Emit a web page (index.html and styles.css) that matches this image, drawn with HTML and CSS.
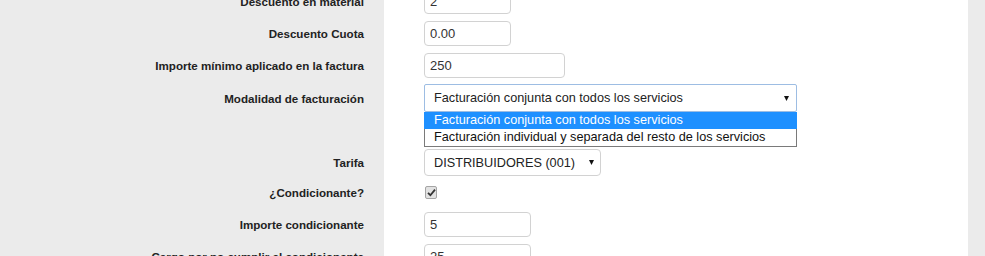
FILE: index.html
```html
<!DOCTYPE html>
<html lang="es">
<head>
    <meta charset="UTF-8">
    <meta name="viewport" content="width=device-width, initial-scale=1.0">
    <title>Condiciones de facturación</title>
    <link rel="stylesheet" href="styles.css">
</head>
<body>
    <form class="form">
        <div class="row gap-7">
            <label class="label" for="descMaterial">Descuento en material</label>
            <div class="field"><input type="text" id="descMaterial" class="input w-sm" value="2"></div>
        </div>
        <div class="row gap-7">
            <label class="label" for="descCuota">Descuento Cuota</label>
            <div class="field"><input type="text" id="descCuota" class="input w-sm" value="0.00"></div>
        </div>
        <div class="row gap-6">
            <label class="label" for="importeMin">Importe mínimo aplicado en la factura</label>
            <div class="field"><input type="text" id="importeMin" class="input w-md" value="250"></div>
        </div>
        <div class="row gap-37">
            <label class="label">Modalidad de facturación</label>
            <div class="field">
                <div class="select-wrap">
                    <div class="select select-open">
                        <span>Facturación conjunta con todos los servicios</span>
                        <svg class="arrow" width="5" height="5" viewBox="0 0 5 5"><path d="M0 0 H5 L2.5 5 Z" fill="#111"/></svg>
                    </div>
                    <ul class="dropdown">
                        <li class="option selected">Facturación conjunta con todos los servicios</li>
                        <li class="option">Facturación individual y separada del resto de los servicios</li>
                    </ul>
                </div>
            </div>
        </div>
        <div class="row gap-10">
            <label class="label">Tarifa</label>
            <div class="field">
                <div class="select select-tarifa">
                    <span>DISTRIBUIDORES (001)</span>
                    <svg class="arrow" width="5" height="5" viewBox="0 0 5 5"><path d="M0 0 H5 L2.5 5 Z" fill="#111"/></svg>
                </div>
            </div>
        </div>
        <div class="row gap-13">
            <label class="label">¿Condicionante?</label>
            <div class="field">
                <span class="checkbox">
                    <svg width="9" height="9" viewBox="0 0 9 9"><path d="M1 4.8 L3.4 7.2 L8 1.6" fill="none" stroke="#333" stroke-width="1.8"/></svg>
                </span>
            </div>
        </div>
        <div class="row gap-7">
            <label class="label" for="importeCond">Importe condicionante</label>
            <div class="field"><input type="text" id="importeCond" class="input w-cond" value="5"></div>
        </div>
        <div class="row gap-7">
            <label class="label" for="cargo">Cargo por no cumplir el condicionante</label>
            <div class="field"><input type="text" id="cargo" class="input w-cond" value="25"></div>
        </div>
    </form>
</body>
</html>
```

FILE: styles.css
```css
body {
    margin: 0;
    padding: 0;
    background-color: #ebebeb;
    font-family: "Liberation Sans", Arial, sans-serif;
    overflow: hidden;
}
.form {
    width: 968px;
    margin-top: -11px;
    background: #fff;
}
.row {
    display: grid;
    grid-template-columns: 384px 1fr;
    --gap: 7px;
}
.gap-6 { --gap: 6px; }
.gap-7 { --gap: 7px; }
.gap-10 { --gap: 10px; }
.gap-13 { --gap: 13px; }
.gap-37 { --gap: 37px; }
.label {
    display: flex;
    justify-content: flex-end;
    align-items: center;
    background-color: #ebebeb;
    padding: 0 20px var(--gap) 0;
    font-size: 11.6px;
    font-weight: bold;
    color: #222;
}
.field {
    padding: 0 0 var(--gap) 40px;
    display: flex;
    align-items: flex-start;
}
.input {
    box-sizing: border-box;
    height: 25px;
    padding: 0 5px;
    border: 1px solid #d2d2d2;
    border-radius: 4px;
    font-family: inherit;
    font-size: 13px;
    color: #333;
    margin: 0;
}
.w-sm { width: 87px; }
.w-md { width: 141px; }
.w-cond { width: 107px; }
.select-wrap {
    position: relative;
}
.select {
    box-sizing: border-box;
    display: flex;
    align-items: center;
    justify-content: space-between;
    padding: 0 7px 0 9px;
    border: 1px solid #d2d2d2;
    border-radius: 4px;
    font-size: 12.7px;
    color: #222;
    background: #fff;
}
.select-open {
    width: 373px;
    height: 28px;
    border-color: #9dbde3;
    border-radius: 2px;
}
.select-tarifa {
    width: 177px;
    height: 27px;
    padding-right: 6px;
}
.arrow {
    flex-shrink: 0;
}
.dropdown {
    position: absolute;
    top: 28px;
    left: 0;
    width: 373px;
    box-sizing: border-box;
    margin: 0;
    padding: 0;
    list-style: none;
    background: #fff;
    border: 1px solid #7a7a7a;
    border-top: none;
    font-size: 12.7px;
    color: #111;
    z-index: 2;
}
.option {
    height: 17px;
    line-height: 17px;
    padding-left: 9px;
}
.option.selected {
    background-color: #1e90ff;
    color: #fff;
    margin: 0 -1px;
    padding-left: 10px;
}
.checkbox {
    box-sizing: border-box;
    width: 12px;
    height: 13px;
    margin-left: 1px;
    display: flex;
    align-items: center;
    justify-content: center;
    border: 1px solid #a5a5a5;
    border-radius: 2px;
    background: #e2e2e2;
}
```
